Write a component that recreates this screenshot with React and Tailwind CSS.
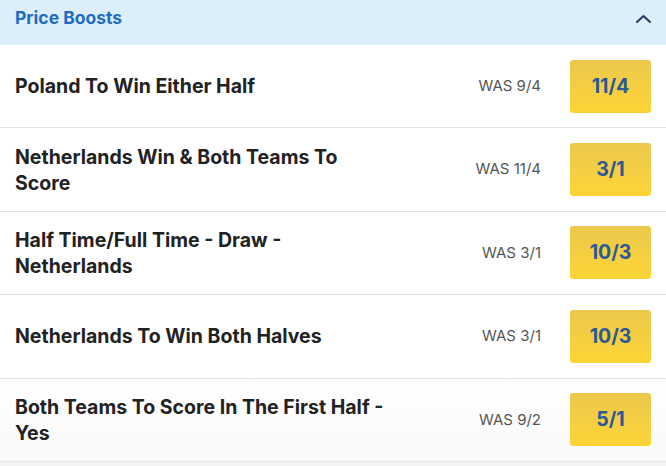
const boosts = [
  { title: 'Poland To Win Either Half', was: '9/4', price: '11/4' },
  { title: 'Netherlands Win & Both Teams To Score', was: '11/4', price: '3/1' },
  { title: 'Half Time/Full Time - Draw - Netherlands', was: '3/1', price: '10/3' },
  { title: 'Netherlands To Win Both Halves', was: '3/1', price: '10/3' },
  { title: 'Both Teams To Score In The First Half - Yes', was: '9/2', price: '5/1' },
];

export default function App() {
  return (
    <div className="w-[666px] h-[466px] overflow-hidden bg-[#f4f4f4] font-['Inter',sans-serif]">
      {/* Header */}
      <div className="h-[45px] bg-[#ddeefb] flex items-center justify-between pl-[15px] pr-[14px]">
        <h2 className="text-[17.5px] font-bold text-[#1f6cc0] -mt-[8px]">Price Boosts</h2>
        <svg width="17" height="10" viewBox="0 0 17 10" className="-mt-[8px]" fill="none">
          <path d="M2 8 L8.5 2 L15 8" stroke="#1e3a5f" strokeWidth="2" strokeLinecap="round" strokeLinejoin="round" />
        </svg>
      </div>

      {/* Rows */}
      <div className="bg-white">
        {boosts.map((b, i) => (
          <div
            key={i}
            className={`h-[83.4px] flex items-center pl-[15px] pr-[15px] border-b border-[#e4e4e4] ${i === boosts.length - 1 ? 'bg-gradient-to-b from-white to-[#f9f9f9]' : ''}`}
          >
            <div className="w-[374px] text-[19.5px] leading-[26px] font-bold text-[#222222]">{b.title}</div>
            <div className="flex-1 text-right text-[15px] text-[#555555] pr-[29px]">WAS {b.was}</div>
            <button
              type="button"
              className="w-[81px] h-[53px] rounded-[3px] bg-gradient-to-b from-[#ebc84c] to-[#fdd535] text-[19.5px] font-bold text-[#2c5896] flex items-center justify-center"
            >
              {b.price}
            </button>
          </div>
        ))}
      </div>
    </div>
  );
}
